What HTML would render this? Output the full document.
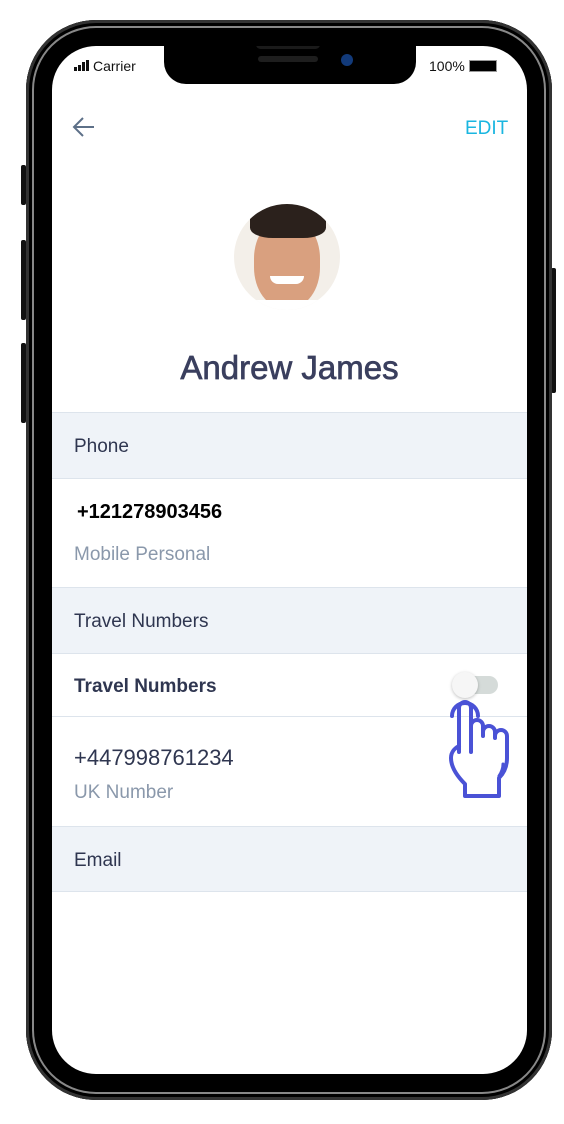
<!DOCTYPE html>
<html><head><meta charset="utf-8"><style>
body{margin:0;width:564px;height:1124px;background:#fff;position:relative;overflow:hidden;font-family:"Liberation Sans",sans-serif}
.phone{position:absolute;left:26px;top:20px;width:526px;height:1080px;background:#000;border-radius:70px;box-shadow:inset 0 0 0 3px #333,inset 0 0 0 6px #000,inset 0 0 0 8px #888}
.btn{position:absolute;background:#111;width:5px;border-radius:2px}
.screen{position:absolute;left:52px;top:46px;width:475px;height:1028px;background:#fff;border-radius:44px;overflow:hidden}
.notch{position:absolute;left:112px;top:0;width:252px;height:38px;background:#000;border-radius:0 0 22px 22px}
.sec{position:absolute;left:0;width:475px;border-top:1px solid #dde4ec;box-sizing:border-box}
.hd{background:#eff3f8;font-size:19px;color:#2f3650;padding-left:22px}
</style></head><body>
<div class="btn" style="left:21px;top:165px;height:40px"></div>
<div class="btn" style="left:21px;top:240px;height:80px"></div>
<div class="btn" style="left:21px;top:343px;height:80px"></div>
<div class="btn" style="left:551px;top:268px;height:125px"></div>
<div class="phone"></div>
<div class="screen">
 <div class="notch"><div style="position:absolute;left:92px;top:-6px;width:64px;height:9px;background:#1a1a1a;border-radius:5px"></div><div style="position:absolute;left:94px;top:10px;width:60px;height:6px;background:#1e1e1e;border-radius:3px"></div><div style="position:absolute;left:177px;top:8px;width:12px;height:12px;background:#123a7a;border-radius:50%"></div></div>
 <div style="position:absolute;left:22px;top:12px;font-size:14px;color:#111"><span style="display:inline-block;width:3px;height:4px;background:#111;margin-right:1px"></span><span style="display:inline-block;width:3px;height:6px;background:#111;margin-right:1px"></span><span style="display:inline-block;width:3px;height:9px;background:#111;margin-right:1px"></span><span style="display:inline-block;width:3px;height:11px;background:#111;margin-right:4px"></span>Carrier</div>
 <div style="position:absolute;left:377px;top:12px;font-size:14px;color:#111">100% <span style="display:inline-block;width:26px;height:10px;background:#000;border:1px solid #999;vertical-align:-1px"></span></div>
 <svg style="position:absolute;left:20px;top:70px" width="24" height="22" viewBox="0 0 24 22"><path d="M22 11H3M11 2L2 11l9 9" fill="none" stroke="#5d7088" stroke-width="2"/></svg>
 <div style="position:absolute;left:413px;top:72px;font-size:19px;color:#1ab6e0">EDIT</div>
 <div style="position:absolute;left:182px;top:158px;width:106px;height:106px;border-radius:50%;background:#f3efe9;overflow:hidden">
  <div style="position:absolute;left:20px;top:14px;width:66px;height:90px;background:#d9a07f;border-radius:45%"></div>
  <div style="position:absolute;left:16px;top:0px;width:76px;height:34px;background:#2b211c;border-radius:40% 40% 30% 30%"></div>
  <div style="position:absolute;left:36px;top:72px;width:34px;height:8px;background:#fff;border-radius:0 0 10px 10px"></div>
  <div style="position:absolute;left:20px;top:96px;width:66px;height:20px;background:#fff"></div>
 </div>
 <div style="position:absolute;left:0;width:475px;top:303px;text-align:center;font-size:33px;color:#3a3f5e;-webkit-text-stroke:0.7px #3a3f5e">Andrew James</div>
 <div class="sec hd" style="top:366px;height:66px;line-height:68px">Phone</div>
 <div class="sec" style="top:432px;height:109px"><div style="position:absolute;left:25px;top:22px;font-size:20px;font-weight:bold;color:#000">+121278903456</div><div style="position:absolute;left:22px;top:65px;font-size:19px;color:#8a98ab">Mobile Personal</div></div>
 <div class="sec hd" style="top:541px;height:66px;line-height:68px">Travel Numbers</div>
 <div class="sec" style="top:607px;height:63px"><div style="position:absolute;left:22px;top:22px;font-size:19px;font-weight:bold;color:#2f3650">Travel Numbers</div>
 <div style="position:absolute;left:402px;top:22px;width:44px;height:18px;background:#d5dbd9;border-radius:9px"></div><div style="position:absolute;left:400px;top:18px;width:26px;height:26px;background:#f6f6f6;border-radius:50%;box-shadow:0 1px 3px rgba(0,0,0,.25)"></div></div>
 <div class="sec" style="top:670px;height:110px"><div style="position:absolute;left:22px;top:28px;font-size:22px;color:#2f3650">+447998761234</div><div style="position:absolute;left:22px;top:65px;font-size:19px;color:#8a98ab">UK Number</div></div>
 <div class="sec hd" style="top:780px;height:66px;line-height:68px;border-bottom:1px solid #dde4ec">Email</div>
 <svg style="position:absolute;left:396px;top:648px" width="70" height="106" viewBox="0 0 70 106"><g fill="none" stroke="#4a52d6" stroke-width="4" stroke-linecap="round" stroke-linejoin="round"><path d="M4 22a13 13 0 0 1 26 0"/><path d="M11 58V14a6 6 0 0 1 12 0v44M23 36v-4a6 6 0 0 1 12 0v10M35 38a6 6 0 0 1 12 0v6M47 42a6 6 0 0 1 12 0v22c0 10-4 16-8 20v18H17V90C11 84 3 74 3 64c0-6 4-10 8-12"/><path d="M55 70c0 5-2 9-4 12" stroke-width="3"/></g></svg>
</div>
</body></html>
